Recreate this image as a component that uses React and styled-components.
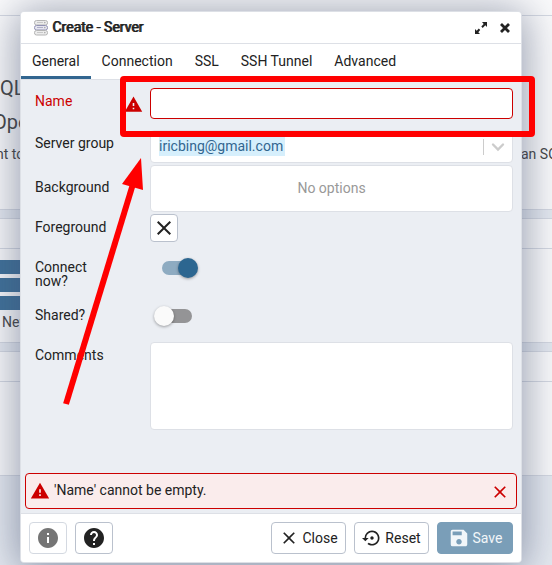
import React from "react";
import styled, { createGlobalStyle, css } from "styled-components";
import {
  MdClose,
  MdHelp,
  MdInfo,
  MdSave,
  MdSettingsBackupRestore,
  MdWarning,
} from "react-icons/md";

const GlobalStyle = createGlobalStyle`
  *, *::before, *::after { box-sizing: border-box; }
  body {
    margin: 0;
    color: #222;
    background: #ebeef3;
    font: 14px/16px Roboto, "Liberation Sans", sans-serif;
  }
  button, input, textarea, select { font: inherit; color: inherit; }
`;

const Screen = styled.div`
  position: relative;
  min-height: 100vh;
  overflow: hidden;
`;

const Dashboard = styled.div`
  position: absolute;
  inset: 0;
  overflow: hidden;
  display: flex;
  flex-direction: column;
  gap: 8px;
  color: #444;
  background: #e6eaf1;
`;

const Panel = styled.section`
  height: ${(p) => p.$height}px;
  flex: none;
  background: #fbfbfc;
  border: solid #d5d9e2;
  border-width: ${(p) => (p.$first ? "0 0 1px" : "1px 0")};
`;

const PanelHead = styled.div`
  height: ${(p) => p.$height}px;
  border-bottom: 1px solid #d5d9e2;
`;

const Intro = styled.div`
  display: grid;
  padding-top: 60px;
  white-space: nowrap;
`;

const Heading = styled.div`
  font-size: 20px;
  line-height: 24px;
  margin: 0 0 10px ${(p) => (p.$clipped ? -7 : 0)}px;
`;

const Sentence = styled.div`
  display: flex;
  justify-content: space-between;
  line-height: 20px;
  margin-left: -4px;
`;

const SentenceEnd = styled.span`
  width: 31px;
`;

const ServerMark = styled.div`
  display: grid;
  gap: 4px;
  width: 48px;
  padding-top: 11px;
`;

const MarkBar = styled.span`
  height: 14px;
  background: #3f7199;
`;

const MarkLabel = styled.span`
  padding: 0 2px;
`;

const Overlay = styled.div`
  position: relative;
  display: flex;
  min-height: 100vh;
  padding: 11px 30px 2px 20px;
`;

const Dialog = styled.div`
  flex: 1;
  display: flex;
  flex-direction: column;
  border: 1px solid #dde0e6;
  border-radius: 4px;
  background: #ebeef3;
  box-shadow: 0 4px 42px 4px rgba(60, 72, 105, 0.52);
`;

const TitleBar = styled.header`
  display: flex;
  align-items: center;
  height: 32px;
  padding: 0 8px 0 13px;
  gap: 4px;
  background: #fff;
  border-bottom: 1px solid #dde0e6;
  border-radius: 3px 3px 0 0;
`;

const Title = styled.h1`
  flex: 1;
  margin: 0;
  padding-bottom: 2px;
  font-size: 14px;
  line-height: 16px;
  font-weight: 400;
  text-shadow: 1px 0 currentColor;
`;

const IconButton = styled.button`
  display: grid;
  place-items: center;
  width: ${(p) => p.$size || 16}px;
  height: ${(p) => p.$size || 16}px;
  padding: 0;
  border: 0;
  background: none;
  color: ${(p) => p.$color || "#222"};
`;

const TitleActions = styled.div`
  display: flex;
  gap: 8px;
`;

const TabList = styled.div`
  display: flex;
  height: 36px;
  background: #fff;
  border-bottom: 1px solid #dde0e6;
`;

const Tab = styled.button`
  padding: 2px 11px 0;
  border: 0;
  border-bottom: 3px solid ${(p) => (p.$active ? "#326690" : "transparent")};
  background: none;
`;

const Form = styled.form`
  flex: 1;
  display: flex;
  flex-direction: column;
  padding: 8px 8px 0 14px;
`;

const Row = styled.div`
  display: grid;
  grid-template-columns: 115px minmax(0, 1fr);
  margin-bottom: ${(p) => p.$gap}px;
`;

const Label = styled.label`
  display: flex;
  justify-content: space-between;
  align-items: flex-start;
  padding: ${(p) => p.$top}px 7px 0 0;
  line-height: 14px;
  color: ${(p) => (p.$error ? "#cc0000" : "#222")};
  svg { margin-top: 1px; }
`;

const NarrowText = styled.span`
  max-width: 80px;
`;

const field = css`
  width: 100%;
  border: 1px solid #dde0e6;
  border-radius: 4px;
  background: #fff;
`;

const TextInput = styled.input`
  ${field}
  height: 31px;
  padding: 4px 8px;
  border-color: #cc0000;
  outline: none;
`;

const Picker = styled.div`
  ${field}
  display: flex;
  align-items: center;
  height: 33px;
  padding: 0 6px 0 8px;
`;

const PickerInput = styled.button`
  flex: 1;
  border: 0;
  padding: 0;
  text-align: left;
  background: none;
  color: #326690;
`;

const PickedValue = styled.span`
  display: inline-block;
  line-height: 19px;
  padding-right: 2px;
  background: #d6effc;
`;

const Divider = styled.span`
  width: 1px;
  height: 16px;
  margin-right: 6px;
  background: #ccc;
`;

const OptionsMenu = styled.div`
  ${field}
  display: grid;
  place-items: center;
  height: 47px;
  padding-bottom: 2px;
  color: #999;
`;

const Switch = styled.input`
  appearance: none;
  display: block;
  position: relative;
  width: 44px;
  height: 20px;
  margin: 0 0 0 4px;
  &::before {
    content: "";
    position: absolute;
    inset: 3px 6px 3px 4px;
    border-radius: 7px;
    background: #949496;
  }
  &::after {
    content: "";
    position: absolute;
    top: 0;
    left: 0;
    width: 20px;
    height: 20px;
    border-radius: 50%;
    background: #fafafa;
    box-shadow: 0 1px 3px rgba(0, 0, 0, 0.35);
  }
  &:checked::before {
    inset: 3px 2px 3px 8px;
    background: #8eabc1;
  }
  &:checked::after {
    left: 24px;
    background: #2c6690;
  }
`;

const CommentBox = styled.textarea`
  ${field}
  display: block;
  height: 88px;
  resize: none;
`;

const Alert = styled.div`
  display: flex;
  align-items: center;
  gap: 4px;
  height: 36px;
  margin: 0 4px 4px;
  padding: 0 8px 0 4px;
  border: 1px solid #cc0000;
  border-radius: 4px;
  background: #faecec;
`;

const AlertText = styled.span`
  flex: 1;
  padding-bottom: 2px;
`;

const Footer = styled.footer`
  display: flex;
  gap: 8px;
  padding: 8px;
  background: #fff;
  border-top: 1px solid #dde0e6;
  border-radius: 0 0 3px 3px;
`;

const Button = styled.button`
  display: inline-flex;
  align-items: center;
  justify-content: center;
  gap: 3px;
  width: ${(p) => p.$width}px;
  height: ${(p) => p.$height || 32}px;
  padding: 0;
  border: 1px solid #bac1cd;
  border-radius: 4px;
  background: #fff;
  svg { flex: none; }
  ${(p) =>
    p.$primary &&
    css`
      border-color: #7a9eb8;
      background: #7a9eb8;
      color: #f2f6f9;
    `}
  ${(p) =>
    p.$dim &&
    css`
      border-color: #d4d9e1;
      color: #757575;
    `}
`;

const Spacer = styled.span`
  flex: 1;
`;

const Annotation = styled.svg`
  position: absolute;
  top: 0;
  left: 0;
  pointer-events: none;
`;

function ServerIcon() {
  return (
    <svg width="14" height="16" viewBox="0 0 14 16" aria-hidden="true">
      {[0, 5, 10].map((y) => (
        <g key={y}>
          <rect
            x="0.5"
            y={y + 0.5}
            width="13"
            height="4.5"
            rx="2"
            fill={y === 5 ? "#e6e6f0" : "#ececec"}
            stroke={y === 5 ? "#9292b4" : "#b4b4b4"}
          />
          <path d={`M3 ${y + 2.5}h6`} stroke={y === 5 ? "#b0b0c8" : "#c8c8c8"} />
          <circle cx="10.8" cy={y + 2.6} r="0.8" fill="#aaa" />
        </g>
      ))}
    </svg>
  );
}

function ExpandIcon() {
  return (
    <svg width="14" height="14" viewBox="0 0 14 14" aria-hidden="true">
      <path
        d="M8 1h5v5l-1.7-1.7-2.6 2.6-1.4-1.4 2.4-2.4zM6 13H1V8l1.700 1.700 2.100-2.100 1.400 1.400-1.900 2.300z"
        fill="currentColor"
      />
    </svg>
  );
}

function HeavyCloseIcon() {
  return (
    <svg width="12" height="12" viewBox="0 0 12 12" aria-hidden="true">
      <path d="M2 2l8 8M10 2l-8 8" stroke="currentColor" strokeWidth="2.8" />
    </svg>
  );
}

function ChevronIcon() {
  return (
    <svg width="16" height="16" viewBox="0 0 16 16" aria-hidden="true">
      <path d="M3 5.5l5 5 5-5" fill="none" stroke="#ccc" strokeWidth="2.4" strokeLinecap="round" />
    </svg>
  );
}

const tabs = ["General", "Connection", "SSL", "SSH Tunnel", "Advanced"];

export default function App() {
  return (
    <Screen>
      <GlobalStyle />
      <Dashboard aria-hidden="true">
        <Panel $first $height={210}>
          <PanelHead $height={16} />
          <Intro>
            <Heading>QL</Heading>
            <Heading $clipped>Ope</Heading>
            <Sentence>
              <span>nt to</span>
              <SentenceEnd>an SQ</SentenceEnd>
            </Sentence>
          </Intro>
        </Panel>
        <Panel $height={125}>
          <PanelHead $height={30} />
          <ServerMark>
            <MarkBar />
            <MarkBar />
            <MarkBar />
            <MarkLabel>New</MarkLabel>
          </ServerMark>
        </Panel>
        <Panel $height={125}>
          <PanelHead $height={30} />
        </Panel>
      </Dashboard>

      <Overlay>
        <Dialog role="dialog" aria-labelledby="dialog-title">
          <TitleBar>
            <ServerIcon />
            <Title id="dialog-title">Create - Server</Title>
            <TitleActions>
              <IconButton aria-label="Maximize"><ExpandIcon /></IconButton>
              <IconButton aria-label="Close dialog"><HeavyCloseIcon /></IconButton>
            </TitleActions>
          </TitleBar>

          <TabList role="tablist">
            {tabs.map((name, i) => (
              <Tab key={name} role="tab" aria-selected={i === 0} $active={i === 0}>
                {name}
              </Tab>
            ))}
          </TabList>

          <Form id="server-form">
            <Row $gap={11}>
              <Label htmlFor="name" $error $top={6}>
                Name <MdWarning size={19} />
              </Label>
              <TextInput id="name" aria-invalid="true" />
            </Row>
            <Row $gap={2}>
              <Label htmlFor="group" $top={6}>Server group</Label>
              <Picker>
                <PickerInput id="group" type="button" aria-haspopup="listbox">
                  <PickedValue>iricbing@gmail.com</PickedValue>
                </PickerInput>
                <Divider />
                <ChevronIcon />
              </Picker>
            </Row>
            <Row $gap={2}>
              <Label as="span" $top={15}>Background</Label>
              <OptionsMenu role="listbox" aria-label="Background">No options</OptionsMenu>
            </Row>
            <Row $gap={16}>
              <Label htmlFor="foreground" $top={6}>Foreground</Label>
              <Button id="foreground" type="button" aria-label="Clear foreground" $width={28} $height={28}>
                <MdClose size={24} />
              </Button>
            </Row>
            <Row $gap={18}>
              <Label htmlFor="connect" $top={2}>
                <NarrowText>Connect now?</NarrowText>
              </Label>
              <Switch id="connect" type="checkbox" defaultChecked />
            </Row>
            <Row $gap={16}>
              <Label htmlFor="shared" $top={2}>Shared?</Label>
              <Switch id="shared" type="checkbox" />
            </Row>
            <Row $gap={43}>
              <Label htmlFor="comments" $top={6}>Comments</Label>
              <CommentBox id="comments" />
            </Row>
          </Form>

          <Alert role="alert">
            <MdWarning size={20} color="#cc0000" />
            <AlertText>'Name' cannot be empty.</AlertText>
            <IconButton aria-label="Dismiss" $size={18} $color="#cc0000">
              <MdClose size={20} />
            </IconButton>
          </Alert>

          <Footer>
            <Button $width={38} $dim aria-label="Information"><MdInfo size={24} /></Button>
            <Button $width={38} aria-label="Help"><MdHelp size={24} /></Button>
            <Spacer />
            <Button $width={75}><MdClose size={20} />Close</Button>
            <Button $width={75}><MdSettingsBackupRestore size={20} />Reset</Button>
            <Button $width={76} $primary disabled><MdSave size={22} />Save</Button>
          </Footer>
        </Dialog>
      </Overlay>

      <Annotation width="552" height="565" viewBox="0 0 552 565" aria-hidden="true">
        <rect x="123" y="79" width="409" height="55" rx="1" fill="none" stroke="#f00" strokeWidth="6" strokeLinejoin="round" />
        <path d="M66 404L133 184" stroke="#f00" strokeWidth="6" />
        <path d="M141 158l-19 26 21 6z" fill="#f00" />
      </Annotation>
    </Screen>
  );
}
